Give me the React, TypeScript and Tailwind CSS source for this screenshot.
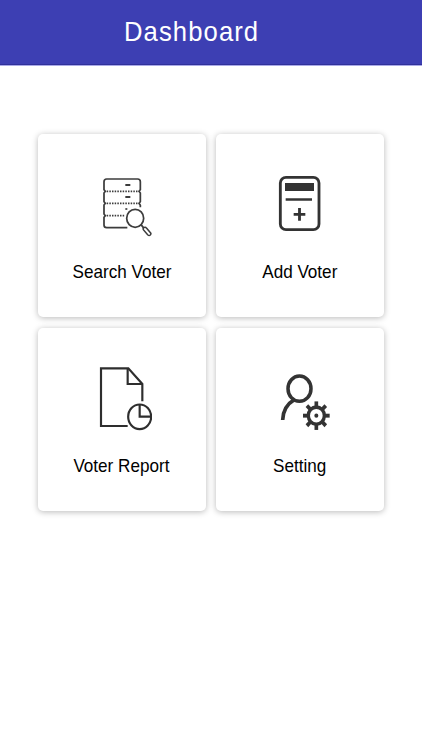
import type { ReactNode } from 'react';

const SearchVoterIcon = () => (
  <svg viewBox="6 9 180 216" className="w-[60px] h-[72px]" fill="none" stroke="#3c3c3c" strokeWidth="5.2">
    <path d="M112 188H50Q42 188 42 180V157L46 152L42 147V120L46 115L42 110V84L46 79L42 74V50Q42 42 50 42H143Q151 42 151 50V74L147 79L151 84V110L147 115L151 121V127" />
    <path d="M50 79H146M50 115H146M50 152H105" strokeDasharray="4.500 3.500" strokeWidth="5" />
    <path d="M106 60H121M106 96H121" strokeWidth="6" />
    <path d="M106 132H112" strokeWidth="5" />
    <ellipse cx="135.500" cy="160" rx="25.500" ry="27" />
    <path d="M153 179L162 190" />
    <path d="M160 194Q158 188 164 187Q167 186 170 190L182 204Q184 207 181 210Q177 213 173 209Z" strokeWidth="4.500" />
  </svg>
);

const AddVoterIcon = () => (
  <svg viewBox="15 9 180 216" className="w-[60px] h-[72px]" fill="none" stroke="#333">
    <rect x="46" y="37" width="116" height="157" rx="17" strokeWidth="8.500" />
    <rect x="60" y="54" width="87" height="24" fill="#333" stroke="none" />
    <path d="M62 103.500H141" strokeWidth="7.500" />
    <path d="M86 148H121M103.500 129V167" strokeWidth="8.500" />
  </svg>
);

const VoterReportIcon = () => (
  <svg viewBox="6 21 180 216" className="w-[60px] h-[72px]" fill="none" stroke="#2e2e2e" strokeWidth="6.5">
    <path d="M113 213H33V40H115L157 87V139" />
    <path d="M113 40V87H157" />
    <ellipse cx="149" cy="185.500" rx="34.500" ry="37" />
    <path d="M149 149V185H183" />
  </svg>
);

const teeth = [0, 45, 90, 135, 180, 225, 270, 315];

const SettingIcon = () => (
  <svg viewBox="15 6 180 216" className="w-[60px] h-[72px]" fill="none" stroke="#333">
    <ellipse cx="103.500" cy="86" rx="34.500" ry="38" strokeWidth="10.500" />
    <path d="M53 180C54 151 66 132 88 119" strokeWidth="11" />
    <g transform="translate(154 167) scale(1 1.07)">
      <circle r="24" strokeWidth="10" />
      <circle r="6" fill="#333" stroke="none" />
      {teeth.map((angle) => (
        <path key={angle} d="M0 -26V-40" strokeWidth="11" transform={`rotate(${angle})`} />
      ))}
    </g>
  </svg>
);

type MenuItem = {
  label: string;
  icon: ReactNode;
};

const menuItems: MenuItem[] = [
  { label: 'Search Voter', icon: <SearchVoterIcon /> },
  { label: 'Add Voter', icon: <AddVoterIcon /> },
  { label: 'Voter Report', icon: <VoterReportIcon /> },
  { label: 'Setting', icon: <SettingIcon /> },
];

const MenuCard = ({ label, icon }: MenuItem) => (
  <button className="flex flex-col items-center w-[168px] h-[183px] pt-[34px] rounded-[5px] bg-white shadow-[0_1px_6px_rgba(0,0,0,0.28)]">
    {icon}
    <span className="mt-[20px] pr-px text-[19px] leading-6 text-black whitespace-nowrap scale-x-[0.9]">
      {label}
    </span>
  </button>
);

const App = () => {
  return (
    <div className="min-h-[750px] bg-white font-['Liberation_Sans',Arial,sans-serif]">
      {/* Header */}
      <header className="h-[66px] bg-[#3d3fb3] border-b border-[#aaaae8] shadow-[inset_0_-1px_0_#30319a]">
        <h1 className="pt-4 pl-[124px] text-[28px] leading-8 tracking-[1.2px] text-white">
          <span className="inline-block origin-left scale-x-[0.915]">Dashboard</span>
        </h1>
      </header>

      {/* Menu */}
      <main className="grid grid-cols-[168px_168px] gap-x-[10px] gap-y-[11px] pt-[68px] pl-[38px]">
        {menuItems.map((item) => (
          <MenuCard key={item.label} label={item.label} icon={item.icon} />
        ))}
      </main>
    </div>
  );
};

export default App;
